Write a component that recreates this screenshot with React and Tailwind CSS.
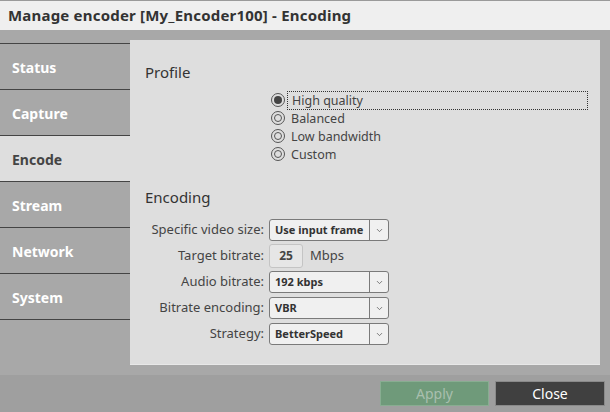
import { ChevronDown } from 'lucide-react';

const tabs = ['Status', 'Capture', 'Encode', 'Stream', 'Network', 'System'];
const profiles = ['High quality', 'Balanced', 'Low bandwidth', 'Custom'];

function Radio({ checked }) {
  return (
    <span className="w-[14px] h-[14px] rounded-full border border-[#555] flex items-center justify-center">
      <span className={`w-[8px] h-[8px] rounded-full ${checked ? 'bg-[#444]' : 'border border-[#555]'}`} />
    </span>
  );
}

function Select({ value }) {
  return (
    <div className="w-[120px] h-[22px] flex items-stretch border border-[#7a7a7a] rounded-[3px] bg-[#f0f0f0]">
      <span className="flex-1 flex items-center pl-[5px] text-[11px] font-bold text-[#333]">{value}</span>
      <span className="w-[19px] border-l border-[#7a7a7a] flex items-center justify-center">
        <ChevronDown className="w-[9px] h-[9px] text-[#555]" strokeWidth={2} />
      </span>
    </div>
  );
}

function Row({ label, children }) {
  return (
    <div className="flex items-center h-[26px]">
      <span className="w-[124px] pr-[5px] text-right text-[13px] text-[#444]">{label}</span>
      {children}
    </div>
  );
}

export default function App() {
  return (
    <div className="w-[610px] h-[412px] flex flex-col bg-[#a8a8a8] overflow-hidden" style={{ fontFamily: '"Noto Sans", "Open Sans", sans-serif' }}>
      <div className="h-[30px] shrink-0 bg-[#efefef] border-t border-[#9a9a9a] flex items-center pl-[8px]">
        <span className="text-[15px] font-bold text-[#333] tracking-[0.2px]">Manage encoder [My_Encoder100] - Encoding</span>
      </div>
      <div className="flex-1 flex pt-[10px]">
        <div className="w-[130px] pt-[3px]">
          <div className="border-t border-[#444]" />
          {tabs.map((t) => (
            <div key={t} className={`h-[46px] border-b border-[#444] flex items-center pl-[12px] pt-[2px] text-[14px] font-bold ${t === 'Encode' ? 'bg-[#dedede] text-[#444]' : 'text-white'}`}>
              {t}
            </div>
          ))}
        </div>
        <div className="w-[470px] h-[325px] bg-[#dedede] border-b border-[#e8e8e8] pl-[15px] pt-[22px]">
          <div className="text-[15px] text-[#333] leading-[20px]">Profile</div>
          <div className="ml-[126px] mt-[9px] flex flex-col">
            {profiles.map((p, i) => (
              <div key={p} className="flex items-center h-[18px] gap-[2px]">
                <Radio checked={i === 0} />
                <span className={`text-[12.5px] text-[#444] pl-[4px] pr-[2px] leading-[17px] ${i === 0 ? 'w-[301px] border border-dotted border-[#333]' : ''}`}>{p}</span>
              </div>
            ))}
          </div>
          <div className="text-[15px] text-[#333] leading-[20px] mt-[24px]">Encoding</div>
          <div className="mt-[10px] flex flex-col">
            <Row label="Specific video size:"><Select value="Use input frame" /></Row>
            <Row label="Target bitrate:">
              <span className="w-[34px] h-[24px] border border-[#c4c4c4] rounded-[3px] bg-[#e6e6e6] flex items-center justify-center text-[12px] font-bold text-[#444]">25</span>
              <span className="ml-[7px] text-[13px] text-[#444]">Mbps</span>
            </Row>
            <Row label="Audio bitrate:"><Select value="192 kbps" /></Row>
            <Row label="Bitrate encoding:"><Select value="VBR" /></Row>
            <Row label="Strategy:"><Select value="BetterSpeed" /></Row>
          </div>
        </div>
      </div>
      <div className="h-[37px] shrink-0 bg-[#9f9f9f] flex items-start justify-end pt-[6px] pr-[5px] gap-[6px]">
        <button className="w-[109px] h-[25px] bg-[#6f9a7a] border border-[#88ad91] text-[14px] text-[#a9bfae]">Apply</button>
        <button className="w-[110px] h-[25px] bg-[#404040] border border-[#8a8a8a] text-[14px] text-white">Close</button>
      </div>
    </div>
  );
}
